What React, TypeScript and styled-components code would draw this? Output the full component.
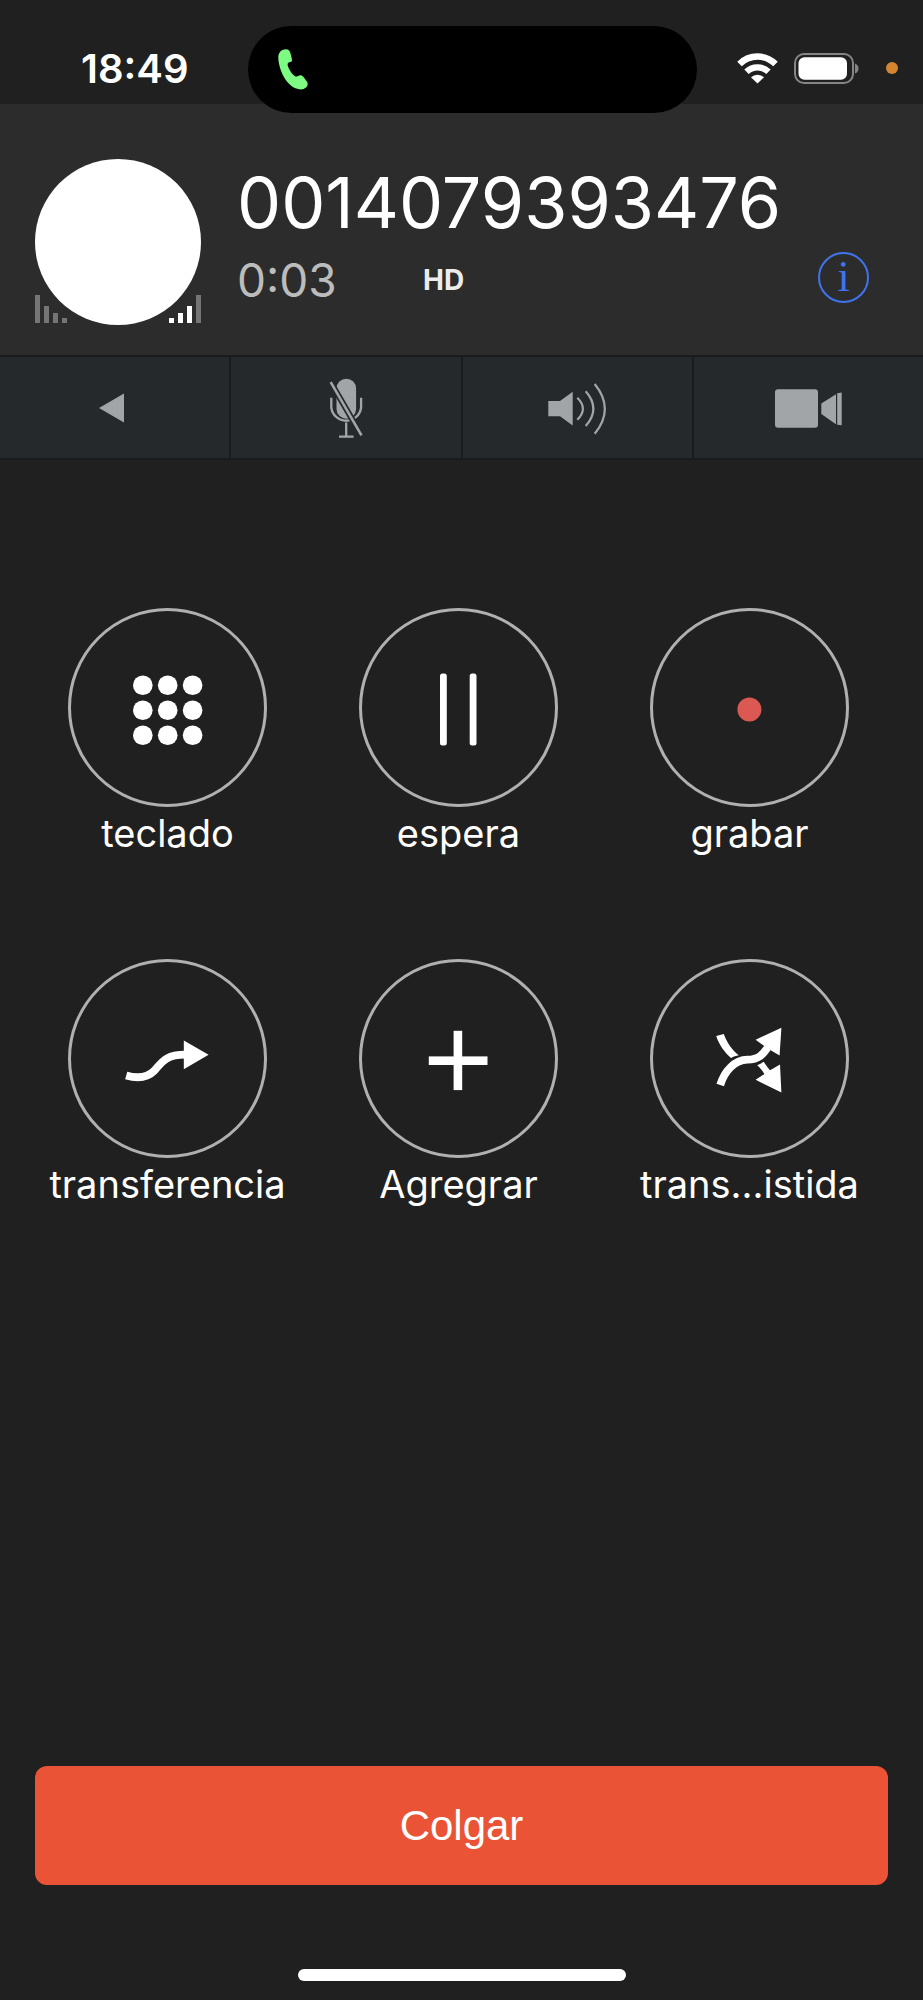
import React from "react";
import styled, { createGlobalStyle } from "styled-components";

const colors = {
  page: "#202020",
  header: "#2c2c2c",
  tool: "#25292c",
  toolEdge: "#191c1e",
  toolIcon: "#a2a5a8",
  ring: "#b0b0b0",
  hangUp: "#ea5335",
  info: "#3f74ee",
};

const GlobalStyle = createGlobalStyle`
  *, *::before, *::after { box-sizing: border-box; }
  body {
    margin: 0;
    background: ${colors.page};
    color: #fff;
    font-family: Inter, "Liberation Sans", sans-serif;
  }
  button {
    margin: 0;
    padding: 0;
    border: 0;
    background: none;
    color: inherit;
    font: inherit;
    cursor: pointer;
  }
  svg { display: block; }
`;

const Screen = styled.div`
  display: flex;
  flex-direction: column;
  min-height: 100vh;
`;

const StatusBar = styled.div`
  position: relative;
  z-index: 1;
  display: grid;
  grid-template-columns: 248px minmax(0, 1fr) 226px;
  align-items: start;
  height: 104px;
  padding-top: 26px;
`;

const Clock = styled.time`
  padding-left: 81px;
  font-size: 40px;
  font-weight: 600;
  line-height: 86px;
`;

const Island = styled.div`
  display: flex;
  align-items: center;
  height: 87px;
  padding: 0 30px;
  border-radius: 44px;
  background: #000;
`;

const StatusIcons = styled.div`
  display: flex;
  align-items: center;
  height: 84px;
  padding-left: 40px;
`;

const BatteryBox = styled.span`
  margin: 0 27px 0 16px;
`;

const Header = styled.header`
  display: flex;
  gap: 36px;
  padding: 55px 54px 30px 35px;
  background: ${colors.header};
`;

const AvatarBox = styled.div`
  position: relative;
  flex: none;
  width: 166px;
  height: 166px;
`;

const Avatar = styled.div`
  height: 100%;
  border-radius: 50%;
  background: #fff;
`;

const Signal = styled.div<{ $side: "left" | "right" }>`
  position: absolute;
  bottom: 2px;
  ${(p) => p.$side}: 0;
  display: flex;
  align-items: flex-end;
  gap: 4px;
`;

const SignalBar = styled.span<{ $height: number; $active?: boolean }>`
  width: 5px;
  height: ${(p) => p.$height}px;
  background: ${(p) => (p.$active ? "#fff" : "#757575")};
`;

const CallDetails = styled.div`
  flex: 1;
  min-width: 0;
`;

const PhoneNumber = styled.h1`
  margin: 0;
  font-size: 70px;
  font-weight: 400;
  line-height: 88px;
`;

const CallMeta = styled.div`
  display: flex;
  align-items: center;
  height: 66px;
`;

const Timer = styled.span`
  width: 186px;
  color: #bcbcbc;
  font-size: 46px;
`;

const Quality = styled.span`
  color: #ececec;
  font-size: 28px;
  font-weight: 700;
`;

const InfoButton = styled.button`
  width: 51px;
  height: 51px;
  margin: 0 0 6px auto;
  border: 2px solid ${colors.info};
  border-radius: 50%;
  color: ${colors.info};
  font-family: "Liberation Serif", serif;
  font-size: 44px;
  line-height: 44px;
`;

const Toolbar = styled.nav`
  display: grid;
  grid-template-columns: repeat(4, minmax(0, 1fr));
  gap: 2px;
  padding: 2px 0;
  background: ${colors.toolEdge};
`;

const ToolButton = styled.button`
  display: flex;
  align-items: center;
  justify-content: center;
  height: 101px;
  background: ${colors.tool};
  color: ${colors.toolIcon};
`;

const Actions = styled.main`
  display: grid;
  grid-template-columns: repeat(3, minmax(0, 1fr));
  row-gap: 100px;
  padding: 148px 28px 100px 22px;
`;

const Action = styled.button`
  display: flex;
  flex-direction: column;
  align-items: center;
  font-size: 38px;
  line-height: 52px;
`;

const Ring = styled.span`
  display: flex;
  align-items: center;
  justify-content: center;
  width: 199px;
  height: 199px;
  border: 3px solid ${colors.ring};
  border-radius: 50%;
`;

const Footer = styled.footer`
  display: flex;
  flex-direction: column;
  align-items: center;
  gap: 84px;
  margin-top: auto;
  padding: 0 35px 19px;
`;

const HangUpButton = styled.button`
  width: 100%;
  height: 119px;
  border-radius: 12px;
  background: ${colors.hangUp};
  font-family: "Liberation Sans", Arial, sans-serif;
  font-size: 42px;
`;

const HomeIndicator = styled.div`
  width: 328px;
  height: 12px;
  border-radius: 6px;
  background: #fff;
`;

const HandsetIcon = () => (
  <svg width="30" height="41" viewBox="0 0 30 41" fill="#7dfb83" aria-hidden="true">
    <path d="M.3 8C.4 3.500 3.500.4 7.500.2C10.500 0 12 2 12.700 5L14 10.500C14.200 12.300 13.300 13 11.500 13.300C9.500 13.700 9.300 15.500 10 17.500C11.300 21 13.300 24 15.800 26.300C17.500 27.900 18.500 27.800 20 26.900C22 25.800 24 26.100 25.500 28L29 32.800C30.200 34.600 29.700 36.800 28 38.500C25.500 40.800 21.500 40.900 17.500 39.300C11.500 36.800 6.500 30.500 3.300 22.500C1.300 17.300.2 12 .3 8Z" />
  </svg>
);

const WifiIcon = () => (
  <svg width="41" height="31" viewBox="0 0 41 31" aria-hidden="true">
    <g fill="none" stroke="#fff" strokeWidth="6.400">
      <path d="M2.500 11A25.500 25.500 0 0 1 38.500 11" />
      <path d="M9.500 18.800A16 16 0 0 1 31.500 18.800" />
    </g>
    <path d="M20.500 30.500L14 24.300A9.500 9.500 0 0 1 27 24.300Z" fill="#fff" />
  </svg>
);

const BatteryIcon = () => (
  <svg width="65" height="31" viewBox="0 0 65 31" aria-hidden="true">
    <rect x="1" y="1" width="58" height="29" rx="9" fill="none" stroke="#858585" strokeWidth="2" />
    <rect x="4.500" y="4.300" width="48.500" height="22.400" rx="6" fill="#fff" />
    <path d="M61 10.500Q64.500 12 64.500 15.500T61 20.500Z" fill="#858585" />
  </svg>
);

const MicInUseDot = () => (
  <svg width="12" height="12" viewBox="0 0 12 12" aria-hidden="true">
    <circle cx="6" cy="6" r="6" fill="#d4862f" />
  </svg>
);

const BackIcon = () => (
  <svg width="31" height="30" viewBox="0 0 31 30" fill="currentColor" aria-hidden="true">
    <path d="M0 15L25 .5V29.500Z" />
  </svg>
);

const MuteIcon = () => (
  <svg width="40" height="60" viewBox="0 0 40 60" fill="none" stroke="currentColor" strokeWidth="2.300" aria-hidden="true">
    <rect x="10.500" y=".7" width="19.600" height="40" rx="9.800" fill="currentColor" stroke="none" />
    <path d="M5.300 19.700V29.500A15 15 0 0 0 35.100 29.500V19.700M20.200 44.500V58.500M13 58.700H27.600" />
    <path d="M6 6.500L33 53" stroke={colors.tool} strokeWidth="6" />
    <path d="M4.700 4.200L35.500 57.300" strokeWidth="2.600" />
  </svg>
);

const SpeakerIcon = () => (
  <svg width="60" height="60" viewBox="0 0 60 60" fill="none" stroke="currentColor" strokeWidth="2.200" aria-hidden="true">
    <path d="M1.300 23H13L25.700 13.800V47.500L13 38.300H1.300Z" fill="currentColor" stroke="none" />
    <path d="M30.300 19.700Q41.500 30.700 30.300 41.700M38.700 13.300Q54 30.700 38.700 48M47.700 6Q68 31 47.700 55.700" />
  </svg>
);

const VideoIcon = () => (
  <svg width="68" height="60" viewBox="0 0 68 60" fill="currentColor" aria-hidden="true">
    <rect x="1" y="11.300" width="43" height="38.500" rx="3" />
    <path d="M47.300 25.500L62 16.300V46.300L47.300 36Z" />
    <path d="M63.200 15.200L67.700 14.500V47.200L63.200 46.700Z" />
  </svg>
);

const ActionIcon = ({ children }: { children: React.ReactNode }) => (
  <svg width="100" height="100" viewBox="0 0 100 100" fill="#fff" aria-hidden="true">
    {children}
  </svg>
);

const KeypadIcon = () => (
  <ActionIcon>
    {[27.3, 52.2, 77.2].map((y) =>
      [24.8, 49.7, 74.600].map((x) => <circle key={`${x}-${y}`} cx={x} cy={y} r="9.800" />)
    )}
  </ActionIcon>
);

const PauseIcon = () => (
  <ActionIcon>
    <rect x="31" y="15.600" width="6.800" height="72" rx="2.500" />
    <rect x="60.700" y="15.600" width="6.800" height="72" rx="2.500" />
  </ActionIcon>
);

const RecordIcon = () => (
  <ActionIcon>
    <circle cx="49.400" cy="51.600" r="12" fill="#dc5853" />
  </ActionIcon>
);

const TransferIcon = () => (
  <ActionIcon>
    <path d="M8.200 66.500C19 69.600 29 69.200 36.500 61.500C44 53.500 47 45.700 67 45.700" fill="none" stroke="#fff" strokeWidth="7.800" />
    <path d="M65.800 31.500L90.600 45.700L65.800 60.200Z" />
  </ActionIcon>
);

const PlusIcon = () => (
  <ActionIcon>
    <rect x="19.800" y="47.400" width="58.700" height="8.600" />
    <rect x="44.600" y="21.800" width="8.600" height="59.300" />
  </ActionIcon>
);

const AttendedTransferIcon = () => (
  <ActionIcon>
    <path d="M16.200 27L23.800 25C27 33.500 32 41.300 38.800 46.200C36 46.600 33.500 47.500 31 49C24.500 43.500 19 35.500 16.200 27Z" />
    <path d="M57.200 56.200C59.500 55.500 61.500 54.300 63.600 52.800C65.500 55.500 67.500 58.300 70.300 61.600L64.500 65.500C62.500 61.500 60 58.500 57.200 56.200Z" />
    <path d="M20.200 76C24.500 62 34.500 50.900 47.500 50.700C58.500 50.600 63 46 69 36.500" fill="none" stroke="#fff" strokeWidth="7.800" />
    <path d="M81.400 18.800L55.600 30.700L63.500 36.500L71.500 41.700L79.600 46.500Z" />
    <path d="M81.400 83.600L55.600 70.800L64.500 65L70.500 61L80 55.500Z" />
  </ActionIcon>
);

const tools = [
  { label: "Atrás", icon: <BackIcon /> },
  { label: "Silenciar", icon: <MuteIcon /> },
  { label: "Altavoz", icon: <SpeakerIcon /> },
  { label: "Vídeo", icon: <VideoIcon /> },
];

const actions = [
  { label: "teclado", icon: <KeypadIcon /> },
  { label: "espera", icon: <PauseIcon /> },
  { label: "grabar", icon: <RecordIcon /> },
  { label: "transferencia", icon: <TransferIcon /> },
  { label: "Agregrar", icon: <PlusIcon /> },
  { label: "trans...istida", icon: <AttendedTransferIcon /> },
];

export default function App() {
  return (
    <>
      <GlobalStyle />
      <Screen>
        <StatusBar>
          <Clock>18:49</Clock>
          <Island>
            <HandsetIcon />
          </Island>
          <StatusIcons>
            <WifiIcon />
            <BatteryBox>
              <BatteryIcon />
            </BatteryBox>
            <MicInUseDot />
          </StatusIcons>
        </StatusBar>

        <Header>
          <AvatarBox>
            <Avatar />
            <Signal $side="left">
              <SignalBar $height={28} />
              <SignalBar $height={17} />
              <SignalBar $height={10} />
              <SignalBar $height={5} />
            </Signal>
            <Signal $side="right">
              <SignalBar $height={5} $active />
              <SignalBar $height={10} $active />
              <SignalBar $height={17} $active />
              <SignalBar $height={28} />
            </Signal>
          </AvatarBox>
          <CallDetails>
            <PhoneNumber>0014079393476</PhoneNumber>
            <CallMeta>
              <Timer>0:03</Timer>
              <Quality>HD</Quality>
              <InfoButton type="button">i</InfoButton>
            </CallMeta>
          </CallDetails>
        </Header>

        <Toolbar>
          {tools.map((tool) => (
            <ToolButton key={tool.label} type="button" aria-label={tool.label}>
              {tool.icon}
            </ToolButton>
          ))}
        </Toolbar>

        <Actions>
          {actions.map((action) => (
            <Action key={action.label} type="button">
              <Ring>{action.icon}</Ring>
              {action.label}
            </Action>
          ))}
        </Actions>

        <Footer>
          <HangUpButton type="button">Colgar</HangUpButton>
          <HomeIndicator />
        </Footer>
      </Screen>
    </>
  );
}
